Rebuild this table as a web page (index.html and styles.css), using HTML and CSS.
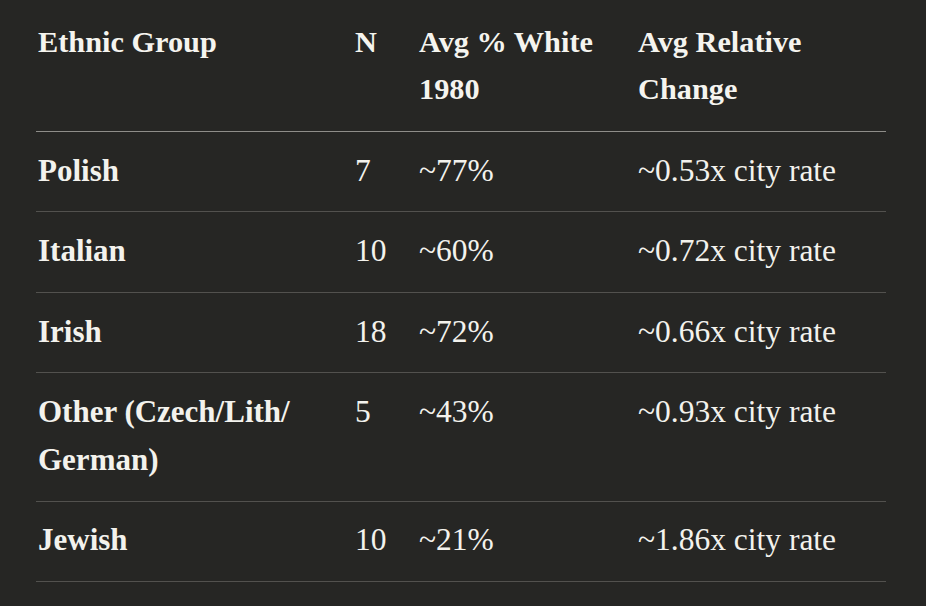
FILE: index.html
```html
<!DOCTYPE html>
<html lang="en">
<head>
<meta charset="utf-8">
<title>Ethnic Group Table</title>
<link rel="stylesheet" href="styles.css">
</head>
<body>
<main class="page">
  <table class="data-table">
    <colgroup>
      <col class="col-group">
      <col class="col-n">
      <col class="col-white">
      <col class="col-change">
    </colgroup>
    <thead>
      <tr>
        <th>Ethnic Group</th>
        <th>N</th>
        <th>Avg % White 1980</th>
        <th>Avg Relative Change</th>
      </tr>
    </thead>
    <tbody>
      <tr>
        <td class="name">Polish</td>
        <td>7</td>
        <td>~77%</td>
        <td>~0.53x city rate</td>
      </tr>
      <tr>
        <td class="name">Italian</td>
        <td>10</td>
        <td>~60%</td>
        <td>~0.72x city rate</td>
      </tr>
      <tr>
        <td class="name">Irish</td>
        <td>18</td>
        <td>~72%</td>
        <td>~0.66x city rate</td>
      </tr>
      <tr>
        <td class="name">Other (Czech/Lith/<wbr>German)</td>
        <td>5</td>
        <td>~43%</td>
        <td>~0.93x city rate</td>
      </tr>
      <tr>
        <td class="name">Jewish</td>
        <td>10</td>
        <td>~21%</td>
        <td>~1.86x city rate</td>
      </tr>
    </tbody>
  </table>
</main>
</body>
</html>
```

FILE: styles.css
```css
html, body {
  margin: 0;
  padding: 0;
  background: #262624;
}

body {
  font-family: "Liberation Serif", "Times New Roman", serif;
  color: #f3f2ed;
  width: 926px;
  height: 606px;
  overflow: hidden;
}

.page {
  padding: 19px 0 0 36px;
}

.data-table {
  table-layout: fixed;
  width: 850px;
  border-collapse: collapse;
  font-size: 31.5px;
}

.col-group { width: 319px; }
.col-n { width: 64px; }
.col-white { width: 219px; }
.col-change { width: 248px; }

.data-table th,
.data-table td {
  text-align: left;
  vertical-align: top;
  padding-right: 16px;
  padding-left: 0;
}

.data-table th:first-child,
.data-table td:first-child {
  padding-left: 2px;
}

.data-table th {
  font-weight: 700;
  font-size: 30.3px;
  line-height: 47px;
  padding-top: 0;
  padding-bottom: 18px;
  border-bottom: 1px solid #8e8d89;
  color: #f5f4ef;
}

.data-table td {
  font-weight: 400;
  line-height: 48px;
  padding-top: 14.8px;
  padding-bottom: 16.6px;
  border-bottom: 1px solid #52514e;
}

.data-table td.name {
  font-weight: 700;
  font-size: 31px;
}
```
